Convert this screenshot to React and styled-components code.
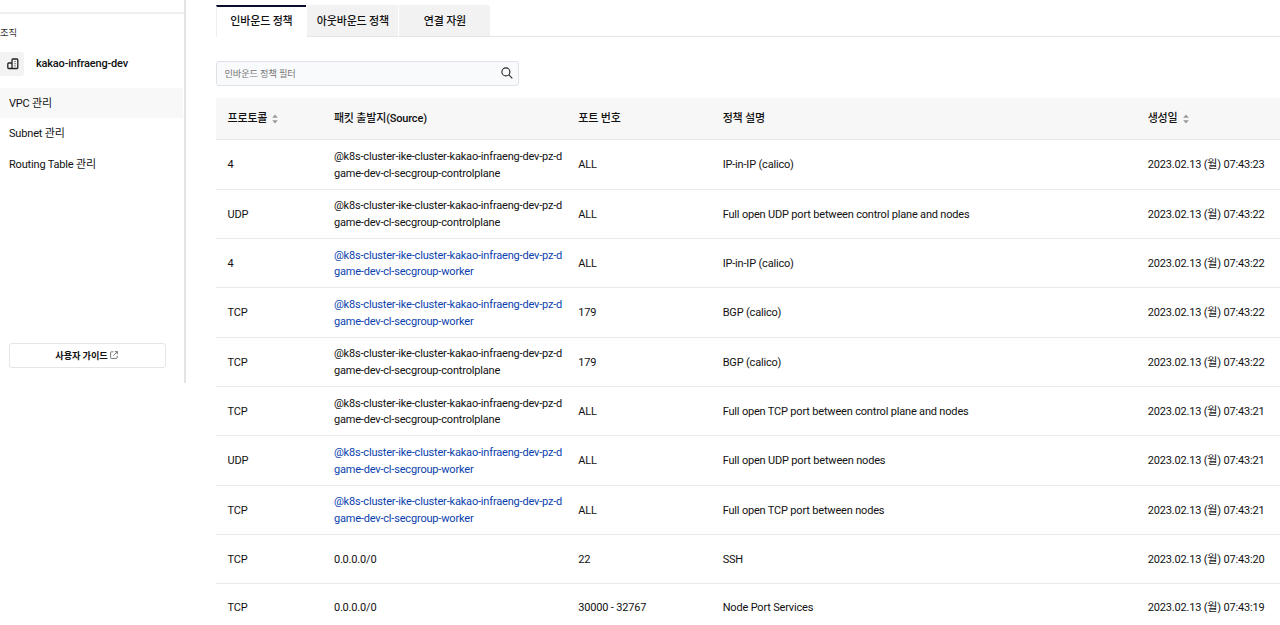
import React from "react";
import styled, { createGlobalStyle } from "styled-components";

const controlplane = "game-dev-cl-secgroup-controlplane";
const worker = "game-dev-cl-secgroup-worker";

const menus = ["VPC 관리", "Subnet 관리", "Routing Table 관리"];
const tabs = ["인바운드 정책", "아웃바운드 정책", "연결 자원"];

const policies = [
  { protocol: "4", group: controlplane, port: "ALL", desc: "IP-in-IP (calico)", sec: "23" },
  { protocol: "UDP", group: controlplane, port: "ALL", desc: "Full open UDP port between control plane and nodes", sec: "22" },
  { protocol: "4", group: worker, port: "ALL", desc: "IP-in-IP (calico)", sec: "22" },
  { protocol: "TCP", group: worker, port: "179", desc: "BGP (calico)", sec: "22" },
  { protocol: "TCP", group: controlplane, port: "179", desc: "BGP (calico)", sec: "22" },
  { protocol: "TCP", group: controlplane, port: "ALL", desc: "Full open TCP port between control plane and nodes", sec: "21" },
  { protocol: "UDP", group: worker, port: "ALL", desc: "Full open UDP port between nodes", sec: "21" },
  { protocol: "TCP", group: worker, port: "ALL", desc: "Full open TCP port between nodes", sec: "21" },
  { protocol: "TCP", port: "22", desc: "SSH", sec: "20" },
  { protocol: "TCP", port: "30000 - 32767", desc: "Node Port Services", sec: "19" },
];

const SortIcon = () => (
  <svg width="6" height="10" viewBox="0 0 6 10" fill="#999">
    <path d="M3 0.4 5.8 3.8H0.2zM3 9.6 0.2 6.2h5.6z" />
  </svg>
);

function App() {
  return (
    <Page>
      <GlobalStyle />
      <Sidebar>
        <OrgLabel>조직</OrgLabel>
        <Org>
          <OrgIcon>
            <svg width="12" height="12" viewBox="0 0 12 12" fill="none" stroke="#222">
              <path d="M5 10.5V1.9q0-.9.9-.9h4q.9 0 .9.9v7.7q0 .9-.9.9H1.7q-.9 0-.9-.9V5.9q0-.9.9-.9H5" strokeWidth="1.3" />
              <path d="M7 3.5h2M7 5.7h2M7 7.9h2" stroke="#777" strokeWidth="0.9" />
            </svg>
          </OrgIcon>
          <OrgName>kakao-infraeng-dev</OrgName>
        </Org>
        <Menu>
          {menus.map((menu, index) => (
            <MenuItem key={menu} $active={index === 0}>
              {menu}
            </MenuItem>
          ))}
        </Menu>
        <GuideButton>
          사용자 가이드
          <svg width="8" height="8" viewBox="0 0 8 8" fill="none" stroke="#555" strokeWidth="0.8">
            <path d="M3.3.8H1.4Q.6.8.6 1.6v5q0 .8.8.8h5q.8 0 .8-.8V4.7M4.8.6h2.6v2.6M7.3.7 3.4 4.6" />
          </svg>
        </GuideButton>
      </Sidebar>
      <Content>
        <Tabs>
          {tabs.map((tab, index) => (
            <Tab key={tab} $active={index === 0}>
              {tab}
            </Tab>
          ))}
        </Tabs>
        <Search>
          <input type="text" placeholder="인바운드 정책 필터" />
          <svg width="12" height="12" viewBox="0 0 12 12" fill="none" stroke="#222" strokeWidth="1.1">
            <circle cx="4.9" cy="4.9" r="4" />
            <path d="m7.8 7.8 3.5 3.5" />
          </svg>
        </Search>
        <HeadRow>
          <Sortable>
            프로토콜 <SortIcon />
          </Sortable>
          <span>패킷 출발지(Source)</span>
          <span>포트 번호</span>
          <span>정책 설명</span>
          <Sortable>
            생성일 <SortIcon />
          </Sortable>
        </HeadRow>
        {policies.map((policy, index) => (
          <Row key={index} $short={!policy.group}>
            <span>{policy.protocol}</span>
            {policy.group ? (
              <Source $link={policy.group === worker}>
                @k8s-cluster-ike-cluster-kakao-infraeng-dev-pz-d
                <br />
                {policy.group}
              </Source>
            ) : (
              <span>0.0.0.0/0</span>
            )}
            <span>{policy.port}</span>
            <span>{policy.desc}</span>
            <span>2023.02.13 (월) 07:43:{policy.sec}</span>
          </Row>
        ))}
      </Content>
    </Page>
  );
}

const GlobalStyle = createGlobalStyle`
  * {
    box-sizing: border-box;
  }
  body {
    margin: 0;
    overflow: hidden;
    background: #fff;
    color: #111;
    font-family: Roboto, "Noto Sans CJK KR", sans-serif;
    font-size: 11px;
    letter-spacing: -0.18px;
    line-height: 16.6px;
  }
`;

const Page = styled.div`
  display: flex;
  align-items: flex-start;
  height: 625px;
  overflow: hidden;
`;

const Sidebar = styled.aside`
  display: flex;
  flex-direction: column;
  flex: none;
  width: 185.5px;
  height: 383px;
  padding-top: 12px;
  border-right: 2px solid #e4e4e4;
  &::before {
    content: "";
    flex: none;
    height: 2px;
    background: #f0f0f0;
  }
`;

const OrgLabel = styled.div`
  height: 16px;
  margin-top: 10px;
  font-size: 9.3px;
  line-height: 18px;
  letter-spacing: -0.1px;
  color: #333;
`;

const Org = styled.div`
  display: flex;
  align-items: center;
  height: 24px;
  margin-top: 12px;
`;

const OrgIcon = styled.span`
  display: flex;
  align-items: center;
  justify-content: center;
  width: 24px;
  height: 24px;
  padding-left: 1px;
  border-radius: 0 3px 3px 0;
  background: #f3f3f3;
`;

const OrgName = styled.strong`
  margin-left: 12px;
  font-weight: 500;
`;

const Menu = styled.nav`
  margin-top: 12px;
`;

const MenuItem = styled.div`
  height: 30.3px;
  margin-right: 1px;
  padding-left: 9px;
  line-height: 32px;
  background: ${(props) => (props.$active ? "#f8f8f8" : "transparent")};
`;

const GuideButton = styled.button`
  display: flex;
  align-items: center;
  justify-content: center;
  gap: 2px;
  width: 157px;
  height: 25px;
  margin: auto 0 15px 9px;
  padding: 0 2px 1px 0;
  border: 1px solid #e5e5e5;
  border-radius: 3px;
  background: #fff;
  color: #111;
  font-family: inherit;
  font-size: 9.2px;
  font-weight: 700;
  letter-spacing: -0.1px;
`;

const Content = styled.main`
  flex: none;
  width: 1064.5px;
  margin-left: 30px;
  padding-top: 5px;
`;

const Tabs = styled.div`
  display: flex;
  height: 32px;
  box-shadow: inset 0 -1px #e6e6e6;
`;

const Tab = styled.div`
  width: ${(props) => (props.$active ? "90.9px" : "92px")};
  height: 32px;
  border-top: 2px solid ${(props) => (props.$active ? "#0b0b2b" : "#f2f2f2")};
  border-left: 1px solid ${(props) => (props.$active ? "#eee" : "#fff")};
  border-bottom: ${(props) => (props.$active ? "none" : "1px solid #e6e6e6")};
  background: ${(props) => (props.$active ? "#fff" : "#f2f2f2")};
  text-align: center;
  line-height: 30px;
  font-weight: 500;
  &:last-child {
    border-top-right-radius: 3px;
  }
`;

const Search = styled.div`
  display: flex;
  align-items: center;
  width: 303.5px;
  height: 25px;
  margin: 24px 0 12px;
  padding: 0 5px 1px 8px;
  border: 1px solid #dfe2e8;
  border-radius: 3px;
  background: #f9fafc;
  input {
    flex: 1;
    padding: 0;
    border: none;
    outline: none;
    background: transparent;
    font-family: inherit;
    font-size: 9.2px;
    letter-spacing: -0.1px;
    &::placeholder {
      color: #757575;
    }
  }
`;

const Row = styled.div`
  display: grid;
  grid-template-columns: 106.4px 244.4px 144.4px 425px 1fr;
  align-items: center;
  height: ${(props) => (props.$short ? "48.6px" : "49.33px")};
  padding: 2px 0 0 12px;
  border-bottom: 1px solid #e9e9e9;
  white-space: nowrap;
`;

const HeadRow = styled(Row)`
  height: 42.4px;
  padding-top: 1px;
  background: #f7f7f7;
  border-color: #e6e6e6;
  font-weight: 500;
`;

const Sortable = styled.span`
  display: flex;
  align-items: center;
  gap: 5px;
`;

const Source = styled.span`
  color: ${(props) => (props.$link ? "#0b3fae" : "inherit")};
`;

export default App;
